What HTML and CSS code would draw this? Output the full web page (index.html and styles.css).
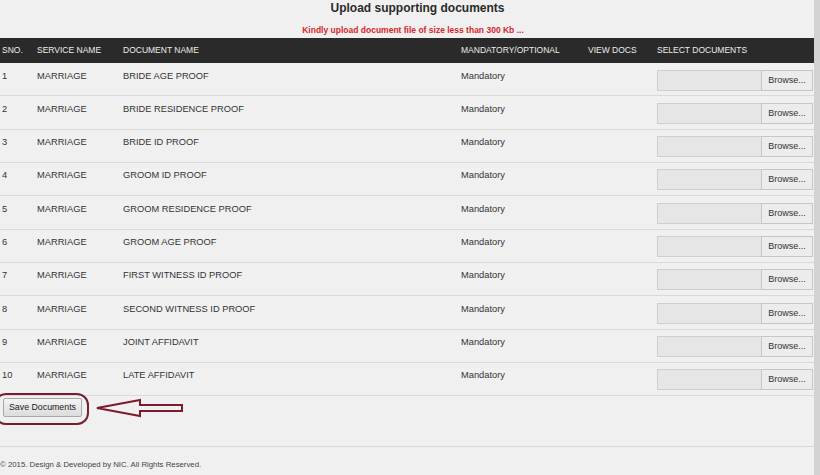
FILE: index.html
```html
<!DOCTYPE html>
<html>
<head>
<meta charset="utf-8">
<link rel="stylesheet" href="styles.css">
</head>
<body>
<div class="page">
  <div class="main">
    <h1 class="title">Upload supporting documents</h1>
    <p class="note">Kindly upload document file of size less than 300 Kb ...</p>
    <div class="grid">
      <div class="row head">
        <div class="c">SNO.</div><div class="c">SERVICE NAME</div><div class="c">DOCUMENT NAME</div><div class="c">MANDATORY/OPTIONAL</div><div class="c">VIEW DOCS</div><div class="c">SELECT DOCUMENTS</div>
      </div>
      <div class="row"><div class="c">1</div><div class="c">MARRIAGE</div><div class="c">BRIDE AGE PROOF</div><div class="c">Mandatory</div><div class="c"></div><div class="c file"><span class="box"></span><span class="btn">Browse...</span></div></div>
      <div class="row"><div class="c">2</div><div class="c">MARRIAGE</div><div class="c">BRIDE RESIDENCE PROOF</div><div class="c">Mandatory</div><div class="c"></div><div class="c file"><span class="box"></span><span class="btn">Browse...</span></div></div>
      <div class="row"><div class="c">3</div><div class="c">MARRIAGE</div><div class="c">BRIDE ID PROOF</div><div class="c">Mandatory</div><div class="c"></div><div class="c file"><span class="box"></span><span class="btn">Browse...</span></div></div>
      <div class="row"><div class="c">4</div><div class="c">MARRIAGE</div><div class="c">GROOM ID PROOF</div><div class="c">Mandatory</div><div class="c"></div><div class="c file"><span class="box"></span><span class="btn">Browse...</span></div></div>
      <div class="row"><div class="c">5</div><div class="c">MARRIAGE</div><div class="c">GROOM RESIDENCE PROOF</div><div class="c">Mandatory</div><div class="c"></div><div class="c file"><span class="box"></span><span class="btn">Browse...</span></div></div>
      <div class="row"><div class="c">6</div><div class="c">MARRIAGE</div><div class="c">GROOM AGE PROOF</div><div class="c">Mandatory</div><div class="c"></div><div class="c file"><span class="box"></span><span class="btn">Browse...</span></div></div>
      <div class="row"><div class="c">7</div><div class="c">MARRIAGE</div><div class="c">FIRST WITNESS ID PROOF</div><div class="c">Mandatory</div><div class="c"></div><div class="c file"><span class="box"></span><span class="btn">Browse...</span></div></div>
      <div class="row"><div class="c">8</div><div class="c">MARRIAGE</div><div class="c">SECOND WITNESS ID PROOF</div><div class="c">Mandatory</div><div class="c"></div><div class="c file"><span class="box"></span><span class="btn">Browse...</span></div></div>
      <div class="row"><div class="c">9</div><div class="c">MARRIAGE</div><div class="c">JOINT AFFIDAVIT</div><div class="c">Mandatory</div><div class="c"></div><div class="c file"><span class="box"></span><span class="btn">Browse...</span></div></div>
      <div class="row"><div class="c">10</div><div class="c">MARRIAGE</div><div class="c">LATE AFFIDAVIT</div><div class="c">Mandatory</div><div class="c"></div><div class="c file"><span class="box"></span><span class="btn">Browse...</span></div></div>
    </div>
    <div class="actions">
      <button class="save">Save Documents</button>
      <div class="ring"></div>
      <svg class="arrow" width="90" height="22" viewBox="0 0 90 22"><polygon points="2,10 45,2 45,7 87,7 87,13 45,13 45,18" fill="none" stroke="#7a1c2c" stroke-width="2" stroke-linejoin="miter"/></svg>
    </div>
    <div class="footer">© 2015. Design &amp; Developed by NIC. All Rights Reserved.</div>
  </div>
  <div class="scroll"></div>
</div>
</body>
</html>
```
FILE: styles.css
```css
* { box-sizing: border-box; }
html, body { margin: 0; padding: 0; }
body {
  background: #f0f0f0;
  font-family: "Liberation Sans", Arial, sans-serif;
  color: #333;
  overflow: hidden;
}
.page { display: flex; width: 820px; height: 475px; }
.main { width: 814px; }
.scroll { width: 6px; background: #d2d2d2; }
.title {
  margin: 0;
  font-size: 12px;
  font-weight: bold;
  line-height: 16px;
  text-align: center;
  padding-left: 21px;
  color: #2a2a2a;
}
.note {
  margin: 8px 0 2px;
  font-size: 8.5px;
  font-weight: bold;
  line-height: 12px;
  text-align: center;
  padding-left: 12px;
  color: #d8262c;
}
.row {
  display: grid;
  grid-template-columns: 35px 86px 338px 127px 69px 159px;
  height: 33.33px;
  border-bottom: 1px solid #dadada;
  font-size: 9.3px;
}
.row .c { padding: 7.5px 0 0 2px; line-height: 11px; white-space: nowrap; }
.row.head {
  height: 25px;
  background: #2a2a2a;
  color: #ececec;
  border-bottom: none;
  font-size: 8.5px;
}
.row.head .c { padding-top: 0; line-height: 25px; }
.row .c.file { display: flex; padding-top: 6.5px; }
.box {
  width: 104px; height: 21px;
  background: #e6e6e6;
  border: 1px solid #cfcfcf;
  border-right: none;
}
.btn {
  width: 52px; height: 21px;
  background: #ececec;
  border: 1px solid #c6c6c6;
  line-height: 19px;
  text-align: center;
  color: #333;
  font-size: 9px;
}
.actions { position: relative; height: 50px; }
.save {
  margin: 1px 0 0 3px;
  width: 79px; height: 19px;
  padding: 0;
  font-family: "Liberation Sans", Arial, sans-serif;
  font-size: 8.8px;
  color: #222;
  background: linear-gradient(#f4f4f4, #dcdcdc);
  border: 1px solid #a8a8a8;
  border-radius: 2px;
}
.ring {
  position: absolute;
  left: -6px; top: -3px;
  width: 95px; height: 32px;
  border: 2px solid #7a1c2c;
  border-radius: 12px;
}
.arrow { position: absolute; left: 95px; top: 2px; }
.footer {
  border-top: 1px solid #d6d6d6;
  padding: 13px 0 0 0;
  font-size: 7.8px;
  line-height: 10px;
  color: #444;
}
```
